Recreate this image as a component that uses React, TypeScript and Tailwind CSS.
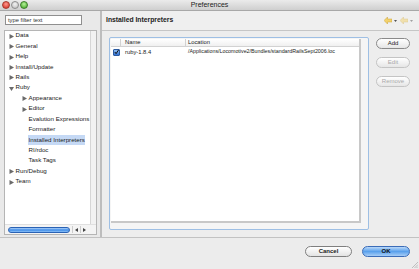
import React from 'react';

const treeItems = [
  { label: 'Data', level: 0, arrow: 'right' },
  { label: 'General', level: 0, arrow: 'right' },
  { label: 'Help', level: 0, arrow: 'right' },
  { label: 'Install/Update', level: 0, arrow: 'right' },
  { label: 'Rails', level: 0, arrow: 'right' },
  { label: 'Ruby', level: 0, arrow: 'down' },
  { label: 'Appearance', level: 1, arrow: 'right' },
  { label: 'Editor', level: 1, arrow: 'right' },
  { label: 'Evalution Expressions', level: 1, arrow: '' },
  { label: 'Formatter', level: 1, arrow: '' },
  { label: 'Installed Interpreters', level: 1, arrow: '', selected: true },
  { label: 'RI/rdoc', level: 1, arrow: '' },
  { label: 'Task Tags', level: 1, arrow: '' },
  { label: 'Run/Debug', level: 0, arrow: 'right' },
  { label: 'Team', level: 0, arrow: 'right' },
];

const Arrow = ({ dir }: { dir: string }) => (
  <svg width="5" height="5" viewBox="0 0 5 5" className="shrink-0">
    {dir === 'down' ? (
      <polygon points="0,1 5,1 2.5,5" fill="#6a6a6a" />
    ) : (
      <polygon points="0.5,0 5,2.5 0.5,5" fill="#6a6a6a" />
    )}
  </svg>
);

const Light = ({ from, to, border }: { from: string; to: string; border: string }) => (
  <div
    className="w-[8px] h-[8px] rounded-full border"
    style={{ background: `radial-gradient(circle at 50% 35%, ${from}, ${to})`, borderColor: border }}
  />
);

const Pill = ({ label, disabled, className = '' }: { label: string; disabled?: boolean; className?: string }) => (
  <div
    className={`h-[11px] rounded-full border flex items-center justify-center text-[6px] bg-gradient-to-b from-white to-[#e6e6e6] ${
      disabled ? 'border-[#c4c4c4] text-[#a8a8a8]' : 'border-[#8a8a8a] text-[#222]'
    } ${className}`}
  >
    {label}
  </div>
);

const NavArrow = ({ color }: { color: string }) => (
  <div className="flex items-center gap-[2px]">
    <svg width="8" height="7" viewBox="0 0 8 7">
      <polygon points="0,3.5 3.5,0 3.5,2 8,2 8,5 3.5,5 3.5,7" fill={color} stroke="#c9a23a" strokeWidth="0.5" />
    </svg>
    <svg width="3" height="2" viewBox="0 0 3 2">
      <polygon points="0,0 3,0 1.5,2" fill="#555" />
    </svg>
  </div>
);

export default function App() {
  return (
    <div
      className="w-[419px] h-[269px] flex flex-col bg-[#ececec] text-[#1a1a1a] overflow-hidden"
      style={{ fontFamily: '"Liberation Sans", Arial, sans-serif' }}
    >
      {/* Title bar */}
      <div className="h-[11px] relative flex items-center bg-gradient-to-b from-[#ebebeb] to-[#cfcfcf] border-b border-[#a8a8a8]">
        <div className="flex items-center gap-[1px] pl-[2px]">
          <Light from="#ff9a8f" to="#d0241a" border="#a53a2e" />
          <Light from="#f2f2f2" to="#bcbcbc" border="#8e8e8e" />
          <Light from="#b6f29a" to="#3aa21f" border="#3d7d2b" />
        </div>
        <div className="absolute inset-0 flex items-center justify-center text-[7px] text-[#222]">Preferences</div>
      </div>

      {/* Main area */}
      <div className="h-[227px] flex border-b border-[#c2c2c2]">
        {/* Left pane */}
        <div className="w-[100px] flex flex-col pt-[4px] pl-[4px] pr-[3px] pb-[2px] bg-[#e9e9e9]">
          <div className="ml-[1px] w-[77px] h-[10px] bg-white border border-[#8f8f8f] text-[5.8px] leading-[8px] px-[2px] text-[#333]">
            type filter text
          </div>
          <div className="mt-[5px] flex-1 flex flex-col bg-white border border-[#b5b5b5]">
            <div className="flex flex-1">
              <div className="flex-1 pl-[4px] -mt-[1px]">
                {treeItems.map((it) => (
                  <div
                    key={it.label}
                    className="h-[10.45px] flex items-center"
                    style={{ paddingLeft: it.level ? 13 : 0 }}
                  >
                    <div className="w-[5px] h-[5px] mr-[1px] mt-[2px]">{it.arrow && <Arrow dir={it.arrow} />}</div>
                    <span
                      className={`text-[6.2px] leading-[10px] whitespace-nowrap px-[0.5px] ${
                        it.selected ? 'bg-[#c5d9f5]' : ''
                      }`}
                    >
                      {it.label}
                    </span>
                  </div>
                ))}
              </div>
              <div className="w-[8px] bg-[#f2f2f2] border-l border-[#d6d6d6]" />
            </div>
            <div className="h-[10px] flex items-center pl-[3px] pr-[9px] border-t border-[#e0e0e0] bg-[#f4f4f4]">
              <div className="w-[64px] h-[6px] rounded-full bg-gradient-to-b from-[#aed0f7] via-[#3d8de8] to-[#8cc0f6] border border-[#2a62b4]" />
              <div className="ml-[2px] flex gap-[1px]">
                <div className="w-[7px] h-[7px] flex items-center justify-center border-l border-[#ccc]">
                  <svg width="3" height="4" viewBox="0 0 3 4"><polygon points="3,0 0,2 3,4" fill="#444" /></svg>
                </div>
                <div className="w-[7px] h-[7px] flex items-center justify-center border-l border-[#ccc]">
                  <svg width="3" height="4" viewBox="0 0 3 4"><polygon points="0,0 3,2 0,4" fill="#444" /></svg>
                </div>
              </div>
            </div>
          </div>
        </div>

        {/* Divider */}
        <div className="w-[3px] bg-[#dcdcdc] border-x border-[#bdbdbd]" />

        {/* Right pane */}
        <div className="flex-1 flex flex-col bg-[#ededed]">
          <div className="h-[20px] flex items-center justify-between pl-[4px] pr-[6px] border-b border-[#c6c6c6] bg-[#efefef]">
            <span className="text-[6.8px] font-bold text-[#222]">Installed Interpreters</span>
            <div className="flex items-center gap-[3px]">
              <NavArrow color="#f3d26b" />
              <div className="opacity-50">
                <NavArrow color="#f3d26b" />
              </div>
            </div>
          </div>
          <div className="flex-1 flex pt-[6px] pl-[7px] pr-[9px] pb-[7px]">
            <div className="w-[260px] flex flex-col border border-[#9ebfe4] rounded-[2px] pt-[1px] pl-[1px] pr-[7px] pb-[6px] bg-[#f5f5f5]">
              <div className="flex-1 bg-white border-r-[2px] border-b-[2px] border-[#c8c8c8] flex flex-col">
                <div className="h-[8px] flex border-b border-[#d2d2d2] bg-gradient-to-b from-white to-[#f0f0f0] text-[5.8px] leading-[7px]">
                  <div className="w-[10px] border-r border-[#d2d2d2]" />
                  <div className="w-[65px] pl-[4px] border-r border-[#d2d2d2]">Name</div>
                  <div className="flex-1 pl-[2px]">Location</div>
                </div>
                <div className="h-[10px] flex items-center text-[5.8px]">
                  <div className="w-[10px] flex items-center justify-center">
                    <div className="w-[7px] h-[7px] rounded-[1px] bg-gradient-to-b from-[#8fbdf2] to-[#2f6fd0] border border-[#2b5aa0] flex items-center justify-center">
                      <svg width="6" height="6" viewBox="0 0 6 6">
                        <polyline points="1,3 2.5,5 5.5,0.5" fill="none" stroke="#111" strokeWidth="1.2" />
                      </svg>
                    </div>
                  </div>
                  <div className="w-[65px] pl-[4px] whitespace-nowrap">ruby-1.8.4</div>
                  <div className="flex-1 pl-[2px] whitespace-nowrap overflow-hidden text-[5.3px]">
                    /Applications/Locomotive2/Bundles/standardRailsSept2006.loc
                  </div>
                </div>
              </div>
            </div>
            <div className="ml-[7px] flex flex-col gap-[8px] pt-[1px]">
              <Pill label="Add" className="w-[34px]" />
              <Pill label="Edit" disabled className="w-[34px]" />
              <Pill label="Remove" disabled className="w-[34px]" />
            </div>
          </div>
        </div>
      </div>

      {/* Bottom buttons */}
      <div className="flex-1 relative flex items-start justify-end pt-[8px] pr-[9px] gap-[10px] bg-[#ececec]">
        <div className="w-[47px] h-[11px] rounded-full border border-[#7f7f7f] bg-gradient-to-b from-white to-[#e3e3e3] flex items-center justify-center text-[6px] font-bold text-[#222]">
          Cancel
        </div>
        <div className="w-[48px] h-[11px] rounded-full border border-[#3b6cb8] bg-gradient-to-b from-[#b9d8f8] via-[#5aa1ec] to-[#a6cdf6] flex items-center justify-center text-[6px] font-bold text-[#111]">
          OK
        </div>
        <svg width="7" height="7" viewBox="0 0 7 7" className="absolute right-[1px] bottom-[1px]">
          <line x1="1" y1="7" x2="7" y2="1" stroke="#aaa" strokeWidth="0.7" />
          <line x1="3.5" y1="7" x2="7" y2="3.5" stroke="#aaa" strokeWidth="0.7" />
          <line x1="5.5" y1="7" x2="7" y2="5.5" stroke="#aaa" strokeWidth="0.7" />
        </svg>
      </div>
    </div>
  );
}
